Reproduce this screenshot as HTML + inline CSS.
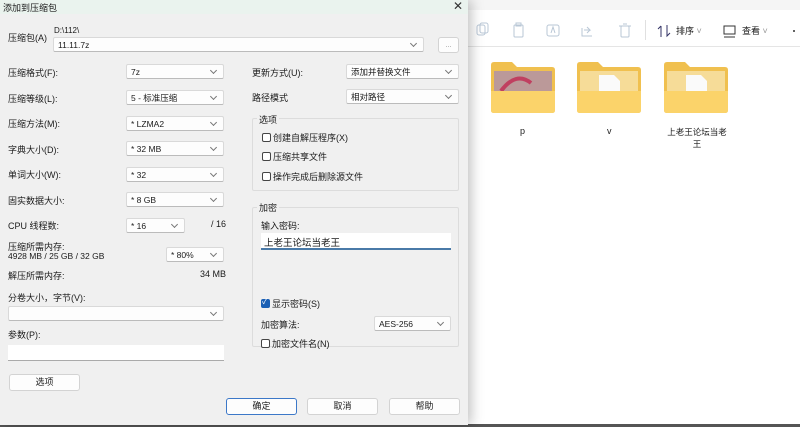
<!DOCTYPE html>
<html><head><meta charset="utf-8"><style>
*{box-sizing:border-box;margin:0;padding:0}
body{width:800px;height:427px;overflow:hidden;background:#fff;position:relative;font-family:"Liberation Sans","Noto Sans CJK SC",sans-serif;font-size:9px;color:#1a1a1a}
.a{position:absolute;white-space:nowrap}
#dlg{position:absolute;left:0;top:0;width:468px;height:425px;background:#f0f0f0;box-shadow:3px 0 12px rgba(0,0,0,.25)}
.cb{position:absolute;height:15px;background:#fdfdfd;border:1px solid #d9d9d9;border-bottom-color:#bbb;border-radius:2px;padding-left:4px;line-height:14px;font-size:8.5px}
.cb:after{content:"";position:absolute;right:7px;top:3px;width:4px;height:4px;border-right:1px solid #777;border-bottom:1px solid #777;transform:rotate(45deg)}
.bt{position:absolute;height:17px;background:#fdfdfd;border:1px solid #d3d3d3;border-radius:3px;text-align:center;line-height:15px;font-size:9px}
.gb{position:absolute;border:1px solid #dcdcdc;border-radius:2px}
.ck{position:absolute;width:9px;height:9px;border:1px solid #444;border-radius:2px;background:#fff}
.f{position:absolute;width:64px;height:52px}
</style></head><body>
<div style="position:absolute;left:468px;top:0;width:332px;height:10px;background:#f5f5f5"></div>
<div style="position:absolute;left:468px;top:46px;width:332px;height:1px;background:#e5e5e5"></div>
<div style="position:absolute;left:645px;top:20px;width:1px;height:20px;background:#e0e0e0"></div>
<svg class="a" style="left:474px;top:22px" width="326" height="18" fill="none" stroke="#b9c7d6" stroke-width="1">
<rect x="3" y="3" width="8" height="10" rx="2"/><rect x="6" y="1" width="8" height="10" rx="2"/>
<rect x="40" y="3" width="9" height="12" rx="1"/><rect x="42" y="1" width="5" height="3"/>
<rect x="73" y="3" width="12" height="11" rx="2"/><path d="M77 11l2-6 2 6"/>
<path d="M110 8h6l-3-3M116 8l-3 3M108 6v8h10"/>
<rect x="147" y="4" width="8" height="11" rx="1"/><path d="M145 4h12M149 2h4"/>
<path d="M187 4v11M184 7l3-3M193 3v11l3-3" stroke="#336"/>
<rect x="250" y="4" width="11" height="8" stroke="#333"/><path d="M250 15h11" stroke="#333"/>
<circle cx="320" cy="9" r="1" fill="#333" stroke="none"/>
</svg>
<div class="a" style="left:676px;top:24px;font-size:9px">排序 <span style="color:#999">˅</span></div>
<div class="a" style="left:742px;top:24px;font-size:9px">查看 <span style="color:#999">˅</span></div>
<svg class="f" style="left:491px;top:61px" viewBox="0 0 64 52"><path d="M0 4q0-3 3-3h18l5 5h35q3 0 3 3v40q0 3-3 3H3q-3 0-3-3z" fill="#f0c04f"/><rect x="3" y="10" width="58" height="25" fill="#b99"/><path d="M10 30q15-20 30-8" stroke="#c04060" stroke-width="4" fill="none"/><path d="M0 30h64v19q0 3-3 3H3q-3 0-3-3z" fill="#fbd36a"/></svg>
<svg class="f" style="left:577px;top:61px" viewBox="0 0 64 52"><path d="M0 4q0-3 3-3h18l5 5h35q3 0 3 3v40q0 3-3 3H3q-3 0-3-3z" fill="#f0c04f"/><rect x="3" y="10" width="58" height="25" fill="#f6dc98"/><path d="M22 14h15l6 6v14H22z" fill="#fafafa"/><path d="M0 30h64v19q0 3-3 3H3q-3 0-3-3z" fill="#fbd36a"/></svg>
<svg class="f" style="left:664px;top:61px" viewBox="0 0 64 52"><path d="M0 4q0-3 3-3h18l5 5h35q3 0 3 3v40q0 3-3 3H3q-3 0-3-3z" fill="#f0c04f"/><rect x="3" y="10" width="58" height="25" fill="#f6dc98"/><path d="M22 14h15l6 6v14H22z" fill="#fafafa"/><path d="M0 30h64v19q0 3-3 3H3q-3 0-3-3z" fill="#fbd36a"/></svg>
<div class="a" style="left:520px;top:126px">p</div>
<div class="a" style="left:607px;top:126px">v</div>
<div class="a" style="left:663px;top:126px;width:68px;text-align:center;white-space:normal;line-height:12px;font-size:8.5px">上老王论坛当老<br>王</div>
<div style="position:absolute;left:0;top:424px;width:800px;height:3px;background:#555"></div>

<div id="dlg">
<div style="position:absolute;left:0;top:0;width:468px;height:14px;background:#eaf3ee"></div>
<div class="a" style="left:3px;top:1px;font-size:9px">添加到压缩包</div>
<div class="a" style="left:453px;top:-1px;font-size:12px;color:#333">✕</div>
<div class="a" style="left:8px;top:31px">压缩包(A)</div>
<div class="a" style="left:54px;top:26px;font-size:8px">D:\112\</div>
<div class="cb" style="left:53px;top:37px;width:371px">11.11.7z</div>
<div class="bt" style="left:438px;top:37px;width:21px;height:16px;font-size:7px;color:#888">...</div>

<div class="a" style="left:8px;top:66px">压缩格式(F):</div><div class="cb" style="left:126px;top:64px;width:98px">7z</div>
<div class="a" style="left:8px;top:92px">压缩等级(L):</div><div class="cb" style="left:126px;top:90px;width:98px">5 - 标准压缩</div>
<div class="a" style="left:8px;top:117px">压缩方法(M):</div><div class="cb" style="left:126px;top:116px;width:98px">* LZMA2</div>
<div class="a" style="left:8px;top:143px">字典大小(D):</div><div class="cb" style="left:126px;top:141px;width:98px">* 32 MB</div>
<div class="a" style="left:8px;top:168px">单词大小(W):</div><div class="cb" style="left:126px;top:167px;width:98px">* 32</div>
<div class="a" style="left:8px;top:194px">固实数据大小:</div><div class="cb" style="left:126px;top:192px;width:98px">* 8 GB</div>
<div class="a" style="left:8px;top:219px">CPU 线程数:</div><div class="cb" style="left:126px;top:218px;width:59px">* 16</div>
<div class="a" style="left:211px;top:219px">/ 16</div>
<div class="a" style="left:8px;top:240px">压缩所需内存:</div>
<div class="a" style="left:8px;top:251px;font-size:8.5px">4928 MB / 25 GB / 32 GB</div>
<div class="cb" style="left:166px;top:247px;width:58px">* 80%</div>
<div class="a" style="left:8px;top:269px">解压所需内存:</div>
<div class="a" style="left:200px;top:269px">34 MB</div>
<div class="a" style="left:8px;top:291px">分卷大小，字节(V):</div>
<div class="cb" style="left:8px;top:306px;width:216px"></div>
<div class="a" style="left:8px;top:328px">参数(P):</div>
<div style="position:absolute;left:8px;top:345px;width:216px;height:16px;background:#fff;border-bottom:1px solid #aaa"></div>
<div class="bt" style="left:9px;top:374px;width:71px">选项</div>

<div class="a" style="left:252px;top:66px">更新方式(U):</div><div class="cb" style="left:346px;top:64px;width:113px">添加并替换文件</div>
<div class="a" style="left:252px;top:91px">路径模式</div><div class="cb" style="left:346px;top:89px;width:113px">相对路径</div>

<div class="gb" style="left:252px;top:118px;width:207px;height:73px"></div>
<div class="a" style="left:257px;top:113px;background:#f0f0f0;padding:0 2px">选项</div>
<div class="ck" style="left:262px;top:133px"></div><div class="a" style="left:273px;top:131px">创建自解压程序(X)</div>
<div class="ck" style="left:262px;top:152px"></div><div class="a" style="left:273px;top:150px">压缩共享文件</div>
<div class="ck" style="left:262px;top:172px"></div><div class="a" style="left:273px;top:170px">操作完成后删除源文件</div>

<div class="gb" style="left:252px;top:207px;width:207px;height:140px"></div>
<div class="a" style="left:257px;top:201px;background:#f0f0f0;padding:0 2px">加密</div>
<div class="a" style="left:261px;top:219px">输入密码:</div>
<div style="position:absolute;left:261px;top:233px;width:190px;height:17px;background:#fff;border-bottom:2px solid #4a7aa8"></div>
<div class="a" style="left:264px;top:235px;font-size:9.5px">上老王论坛当老王</div>
<div class="ck" style="left:261px;top:299px;background:#1a5fb4;border-color:#1a5fb4"></div>
<div class="a" style="left:262px;top:296px;color:#fff;font-size:8px">✓</div>
<div class="a" style="left:272px;top:297px">显示密码(S)</div>
<div class="a" style="left:261px;top:318px">加密算法:</div>
<div class="cb" style="left:374px;top:316px;width:77px">AES-256</div>
<div class="ck" style="left:261px;top:339px"></div><div class="a" style="left:272px;top:337px">加密文件名(N)</div>

<div class="bt" style="left:226px;top:398px;width:71px;border-color:#3c78c8">确定</div>
<div class="bt" style="left:307px;top:398px;width:71px">取消</div>
<div class="bt" style="left:389px;top:398px;width:71px">帮助</div>
</div>
</body></html>
